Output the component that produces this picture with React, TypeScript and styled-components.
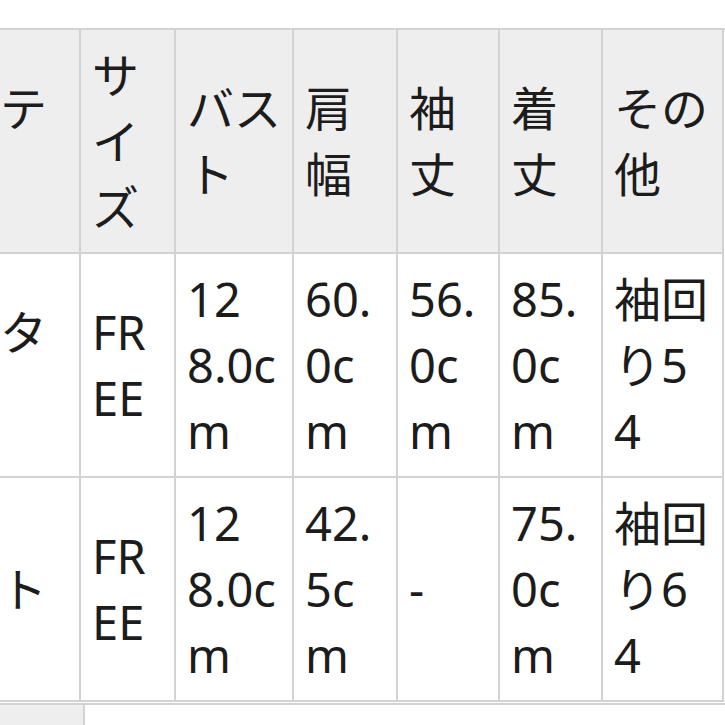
import { Fragment } from "react"
import styled, { createGlobalStyle } from "styled-components"

const GlobalStyle = createGlobalStyle`
    html, body {
        margin: 0;
        padding: 0;
        background: #ffffff;
        overflow: hidden;
    }
    body {
        font-family: "Noto Sans", "Noto Sans CJK JP", sans-serif;
        color: #1c1c1c;
    }
`

const Page = styled.div`
    height: 725px;
    overflow: hidden;
    padding-top: 28px;
    box-sizing: border-box;
`

const SizeTable = styled.div`
    display: grid;
    grid-template-columns: 81px 95px 118px 104px 102px 103px 121px;
    border-top: 2px solid #d2d2d2;
`

const Cell = styled.div<{ $head?: boolean; $edge?: boolean }>`
    box-sizing: border-box;
    display: flex;
    flex-direction: column;
    justify-content: center;
    padding: ${(p) => (p.$edge ? "12px 0 12px 0" : "12px 9px 12px 11px")};
    border-right: 2px solid #d2d2d2;
    border-bottom: 2px solid #d2d2d2;
    background: ${(p) => (p.$head ? "#eeeeee" : "#ffffff")};
    font-size: 47px;
    font-weight: 400;
    line-height: 66px;
    word-break: break-all;
    white-space: normal;
    overflow: hidden;
`

const NextTable = styled.div`
    display: grid;
    grid-template-columns: 85px 1fr;
    margin-top: 1px;
    border-top: 2px solid #d2d2d2;
`

const NextCell = styled.div<{ $head?: boolean }>`
    height: 60px;
    box-sizing: border-box;
    border-right: ${(p) => (p.$head ? "2px solid #d2d2d2" : "none")};
    background: ${(p) => (p.$head ? "#eeeeee" : "#ffffff")};
`

const headers = ["サイズ", "バスト", "肩幅", "袖丈", "着丈", "その他"]

interface SizeRow {
    edge: string
    edgeLines: number
    size: string
    bust: [string, string]
    shoulder: string
    sleeve: string
    length: string
    other: string
}

const rows: SizeRow[] = [
    { edge: "タ", edgeLines: 2, size: "FREE", bust: ["12", "8.0cm"], shoulder: "60.0cm", sleeve: "56.0cm", length: "85.0cm", other: "袖回り54" },
    { edge: "ト", edgeLines: 1, size: "FREE", bust: ["12", "8.0cm"], shoulder: "42.5cm", sleeve: "-", length: "75.0cm", other: "袖回り64" },
]

function EdgeText({ text, lines }: { text: string; lines: number }) {
    // the first column is cut off at the left edge; keep the visible line in place
    return (
        <>
            {text}
            {lines > 1 && (
                <>
                    <br />
                    {"\u00a0"}
                </>
            )}
        </>
    )
}

export default function App() {
    return (
        <>
            <GlobalStyle />
            <Page>
                <SizeTable>
                    <Cell $head $edge>
                        <EdgeText text="テ" lines={2} />
                    </Cell>
                    {headers.map((h) => (
                        <Cell $head key={h}>{h}</Cell>
                    ))}
                    {rows.map((r, i) => (
                        <Fragment key={i}>
                            <Cell $edge>
                                <EdgeText text={r.edge} lines={r.edgeLines} />
                            </Cell>
                            <Cell>{r.size}</Cell>
                            <Cell>
                                {r.bust[0]}
                                <br />
                                {r.bust[1]}
                            </Cell>
                            <Cell>{r.shoulder}</Cell>
                            <Cell>{r.sleeve}</Cell>
                            <Cell>{r.length}</Cell>
                            <Cell>{r.other}</Cell>
                        </Fragment>
                    ))}
                </SizeTable>
                <NextTable>
                    <NextCell $head />
                    <NextCell />
                </NextTable>
            </Page>
        </>
    )
}
